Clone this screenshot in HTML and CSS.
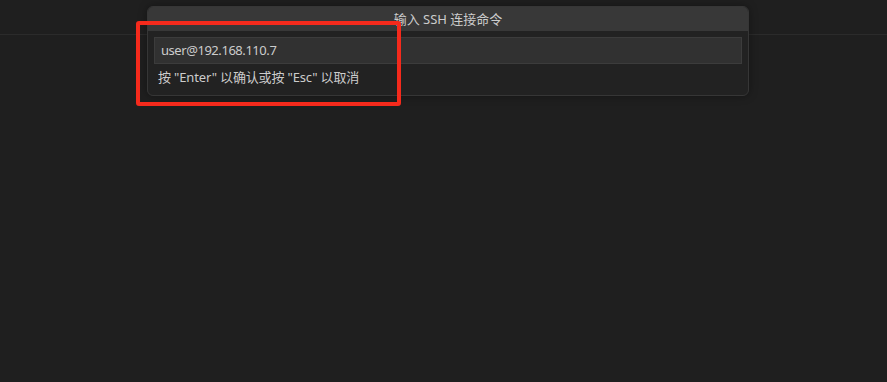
FILE: index.html
```html
<!DOCTYPE html>
<html lang="zh-CN">
<head>
<meta charset="utf-8">
<link rel="stylesheet" href="styles.css">
</head>
<body>
<div class="topbar"></div>
<div class="quick-input">
  <div class="qi-title">输入 SSH 连接命令</div>
  <div class="qi-body">
    <div class="qi-input">user@192.168.110.7</div>
    <div class="qi-hint">按 "Enter" 以确认或按 "Esc" 以取消</div>
  </div>
</div>
<div class="highlight"></div>
</body>
</html>
```
FILE: styles.css
```css
html, body {
  margin: 0;
  padding: 0;
  height: 100%;
  background: #1f1f1f;
  font-family: "Noto Sans", "Noto Sans CJK SC", sans-serif;
  color: #cccccc;
  overflow: hidden;
}
.topbar {
  height: 34px;
  border-bottom: 1px solid #2b2b2b;
}
.quick-input {
  position: absolute;
  left: 147px;
  top: 6px;
  width: 600px;
  height: 88px;
  background: #222222;
  border: 1px solid #363636;
  border-radius: 6px;
  box-shadow: 0 0 8px rgba(0, 0, 0, 0.36);
  overflow: hidden;
}
.qi-title {
  height: 24px;
  line-height: 24px;
  background: #383838;
  text-align: center;
  font-size: 13px;
  color: #cccccc;
}
.qi-body {
  padding: 6px 6px 0 6px;
}
.qi-input {
  box-sizing: border-box;
  height: 27px;
  line-height: 25px;
  background: #313131;
  border: 1px solid #3c3c3c;
  padding: 0 6px;
  font-size: 13px;
  letter-spacing: -0.45px;
  color: #cccccc;
}
.qi-hint {
  padding: 3px 4px 0 4px;
  font-size: 13px;
  line-height: 20px;
  letter-spacing: -0.15px;
  color: #cccccc;
}
.highlight {
  position: absolute;
  left: 136px;
  top: 21px;
  width: 257px;
  height: 77px;
  border: 4px solid #f52a1c;
  border-radius: 3px;
}
```
